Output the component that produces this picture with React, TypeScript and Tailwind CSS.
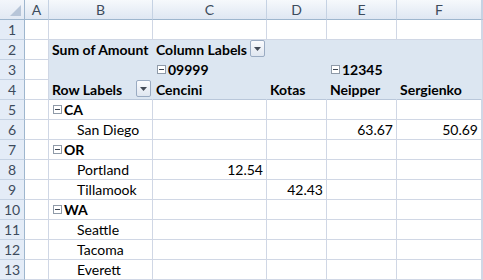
import React from 'react';

type Cell = {
    text?: string;
    bold?: boolean;
    align?: 'left' | 'right';
    indent?: boolean;
    toggle?: boolean;
    dropdown?: boolean;
};

type Row = {
    n: number;
    cells: { [col: string]: Cell };
};

const COLS = ['A', 'B', 'C', 'D', 'E', 'F', 'G'];
const BAND_COLS = ['B', 'C', 'D', 'E', 'F'];

const rows: Row[] = [
    { n: 1, cells: {} },
    {
        n: 2,
        cells: {
            B: { text: 'Sum of Amount', bold: true },
            C: { text: 'Column Labels', bold: true, dropdown: true },
        },
    },
    {
        n: 3,
        cells: {
            C: { text: '09999', bold: true, toggle: true },
            E: { text: '12345', bold: true, toggle: true },
        },
    },
    {
        n: 4,
        cells: {
            B: { text: 'Row Labels', bold: true, dropdown: true },
            C: { text: 'Cencini', bold: true },
            D: { text: 'Kotas', bold: true },
            E: { text: 'Neipper', bold: true },
            F: { text: 'Sergienko', bold: true },
        },
    },
    { n: 5, cells: { B: { text: 'CA', bold: true, toggle: true } } },
    {
        n: 6,
        cells: {
            B: { text: 'San Diego', indent: true },
            E: { text: '63.67', align: 'right' },
            F: { text: '50.69', align: 'right' },
        },
    },
    { n: 7, cells: { B: { text: 'OR', bold: true, toggle: true } } },
    {
        n: 8,
        cells: {
            B: { text: 'Portland', indent: true },
            C: { text: '12.54', align: 'right' },
        },
    },
    {
        n: 9,
        cells: {
            B: { text: 'Tillamook', indent: true },
            D: { text: '42.43', align: 'right' },
        },
    },
    { n: 10, cells: { B: { text: 'WA', bold: true, toggle: true } } },
    { n: 11, cells: { B: { text: 'Seattle', indent: true } } },
    { n: 12, cells: { B: { text: 'Tacoma', indent: true } } },
    { n: 13, cells: { B: { text: 'Everett', indent: true } } },
];

const ToggleBox: React.FC = () => (
    <span className="relative mr-[2px] mb-[4px] inline-block h-[9px] w-[9px] shrink-0 border border-[#8f9aa8] bg-white">
        <span className="absolute left-[1px] top-[3px] h-px w-[5px] bg-[#3c4654]" />
    </span>
);

const DropButton: React.FC = () => (
    <span className="ml-auto mr-[1px] mb-[1px] flex h-[17px] w-[15px] shrink-0 items-center justify-center rounded-[2px] border border-[#9aabc2] bg-gradient-to-b from-[#fbfcfe] to-[#dfe6f0]">
        <svg width="7" height="4" viewBox="0 0 7 4">
            <path d="M0 0h7L3.5 4z" fill="#444b57" />
        </svg>
    </span>
);

const SheetCell: React.FC<{ cell?: Cell; band: boolean; bandBottom: boolean }> = ({ cell, band, bandBottom }) => {
    const bg = band ? 'bg-[#dce6f1]' : 'bg-white';
    const borderR = band ? 'border-r-[#dce6f1]' : 'border-r-[#d0d7e5]';
    const borderB = band && !bandBottom ? 'border-b-[#dce6f1]' : bandBottom ? 'border-b-[#b9c7da]' : 'border-b-[#d0d7e5]';

    return (
        <div className={`flex items-end overflow-visible whitespace-nowrap border-r border-b ${bg} ${borderR} ${borderB}`}>
            {cell && (
                <div
                    className={`flex w-full items-end pb-[1px] text-[14px] leading-[17px] text-black ${
                        cell.align === 'right' ? 'justify-end pr-[3px]' : cell.indent ? 'pl-[28px]' : cell.toggle ? 'pl-[4px]' : 'pl-[3px]'
                    } ${cell.bold ? 'font-bold' : 'font-normal'}`}
                >
                    {cell.toggle && <ToggleBox />}
                    <span>{cell.text}</span>
                    {cell.dropdown && <DropButton />}
                </div>
            )}
        </div>
    );
};

const App: React.FC = () => {
    return (
        <div
            className="grid h-[280px] w-[483px] overflow-hidden bg-white grid-cols-[25px_24px_104px_114px_60px_70px_85px_1fr] grid-rows-[repeat(14,20px)]"
            style={{ fontFamily: 'Lato, "Open Sans", sans-serif' }}
        >
            {/* corner */}
            <div className="relative border-r border-b border-[#9eb6ce] bg-gradient-to-b from-[#f3f6fb] to-[#e2e9f3]">
                <svg className="absolute right-[3px] bottom-[3px]" width="11" height="11" viewBox="0 0 11 11">
                    <path d="M11 0V11H0z" fill="#b7c5d8" />
                </svg>
            </div>
            {COLS.map(c => (
                <div
                    key={c}
                    className="flex items-center justify-center border-r border-b border-r-[#c5d2e3] border-b-[#9eb6ce] bg-gradient-to-b from-[#f6f9fc] to-[#dfe7f2] text-[14px] leading-none text-[#3d4b5c]"
                >
                    {c === 'G' ? '' : c}
                </div>
            ))}
            {rows.map(row => (
                <React.Fragment key={row.n}>
                    <div className="flex items-center justify-center border-r border-b border-r-[#9eb6ce] border-b-[#c5d2e3] bg-[#e4ecf7] text-[14px] leading-none text-[#3d4b5c]">
                        {row.n}
                    </div>
                    {COLS.map(c => {
                        const inBand = row.n >= 2 && row.n <= 4 && BAND_COLS.includes(c);
                        return (
                            <SheetCell
                                key={c}
                                cell={row.cells[c]}
                                band={inBand}
                                bandBottom={inBand && row.n === 4}
                            />
                        );
                    })}
                </React.Fragment>
            ))}
        </div>
    );
};

export default App;
